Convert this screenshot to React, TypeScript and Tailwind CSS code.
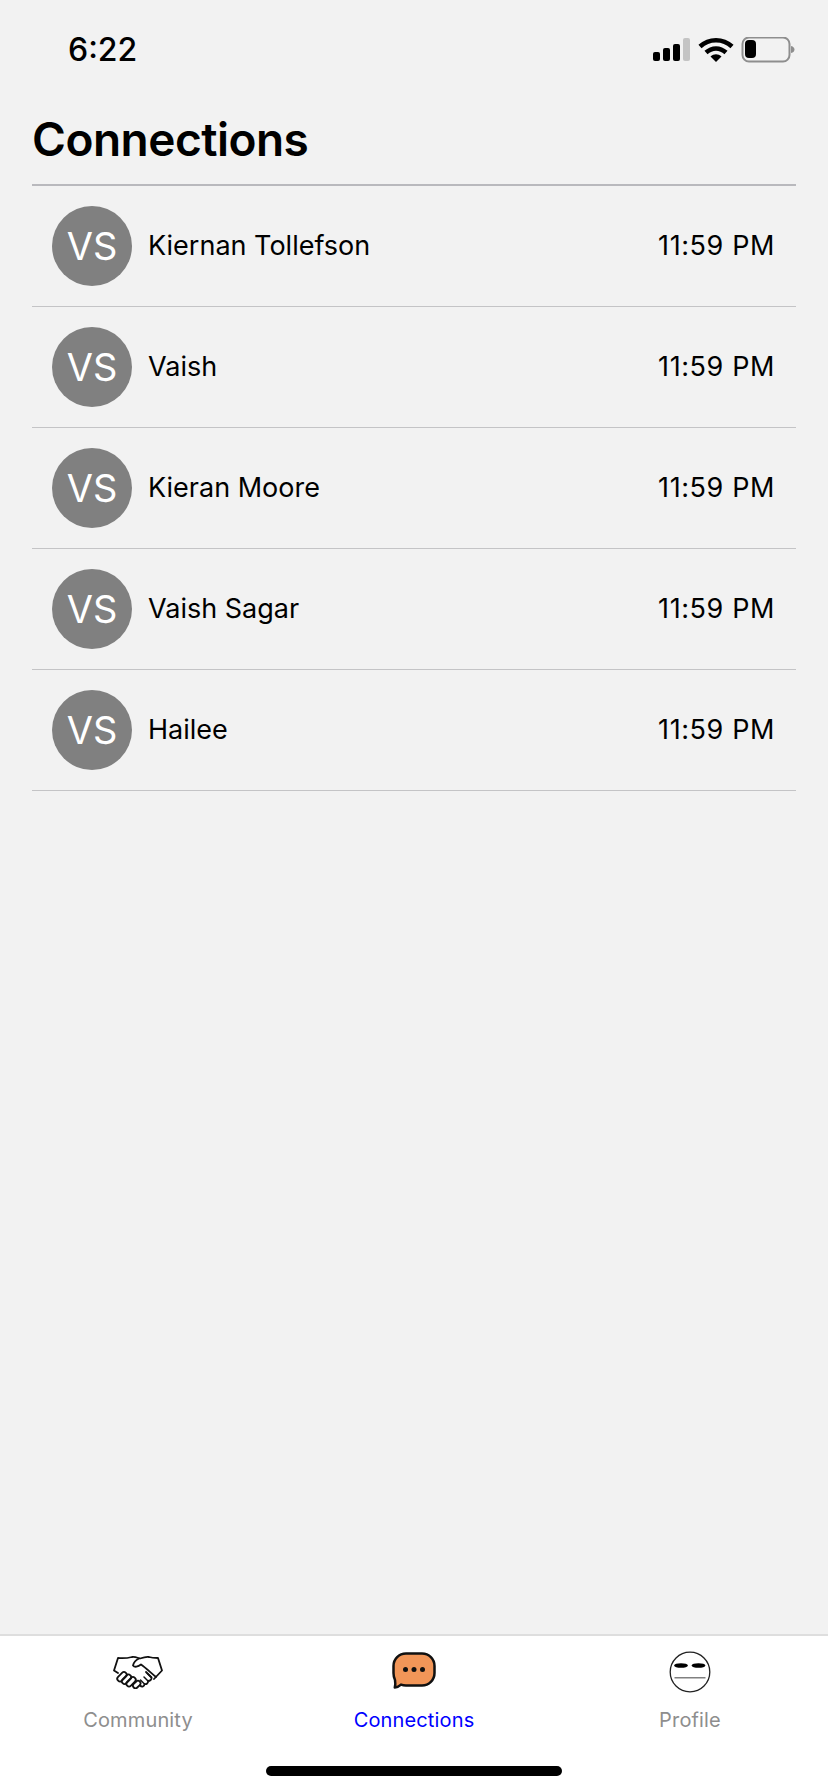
import React from 'react';

const connections = ['Kiernan Tollefson', 'Vaish', 'Kieran Moore', 'Vaish Sagar', 'Hailee'];

const StatusIcons = () => (
  <svg width="144" height="28" viewBox="0 0 144 28" className="block">
    <rect x="1" y="15" width="7" height="9" rx="2" fill="#000" />
    <rect x="11" y="11" width="7" height="13" rx="2" fill="#000" />
    <rect x="21" y="7" width="7" height="17" rx="2" fill="#000" />
    <rect x="31" y="1" width="7" height="23" rx="2" fill="#c4c4c4" />
    <path d="M48 9.5C57 1 71 1 80 9.5" fill="none" stroke="#000" strokeWidth="4.5" />
    <path d="M54 15.5C60 10 68 10 74 15.5" fill="none" stroke="#000" strokeWidth="4.5" />
    <path d="M58.5 19.5C62 16.5 66 16.5 69.500 19.500L64 25Z" fill="#000" />
    <rect x="90.500" y="0.500" width="47" height="24" rx="6.500" fill="none" stroke="#8e8e8e" strokeWidth="2" />
    <rect x="93" y="3" width="11" height="18" rx="4" fill="#000" />
    <path d="M139 9C141.500 9.500 142.500 11 142.500 12.500C142.500 14 141.500 15.500 139 16Z" fill="#8e8e8e" />
  </svg>
);

const HandshakeIcon = () => (
  <svg width="50" height="34" viewBox="0 0 50 34" fill="none" stroke="#111" strokeWidth="1.800" strokeLinejoin="round" strokeLinecap="round" className="block">
    <path d="M5 18L1 15.500L5 3C10 3.500 15 3 19 2C22 1.500 25 3 27 3.500C30 2.500 33 1.500 36 2C39 3 42 3 45 3L49 15.500L41 24" />
    <path d="M26 3.500C23 5 20.500 8 20 10.500C21.500 12.500 25 12 28 9.500C33 13 38 18 43 22" />
    <rect x="3.500" y="19" width="11" height="5.500" rx="2.700" transform="rotate(40 9 21.750) rotate(-85 9 21.750)" />
    <rect x="8" y="21.500" width="11" height="5.500" rx="2.700" transform="rotate(-45 13.500 24.250)" />
    <rect x="12.500" y="24" width="11" height="5.500" rx="2.700" transform="rotate(-45 18 26.750)" />
    <rect x="19.500" y="27" width="8.500" height="5" rx="2.500" transform="rotate(-45 23.750 29.500)" />
    <path d="M27 30.500C29 32.500 31.500 31.500 31.500 29C33.500 29.500 35.500 28 35 26C37 26 39 24.500 38.500 22.500L33 17" />
    <path d="M31.500 29L27.500 25M35 26L31 22M38.500 22.500L34.500 18.500" strokeWidth="1.500" />
  </svg>
);

const ChatIcon = () => (
  <svg width="44" height="37" viewBox="0 0 44 37" className="block">
    <path d="M14 1.500H30C37 1.500 42.500 7 42.500 14V21C42.500 28 37 33.500 30 33.500H14C12 33.500 10.500 33.200 9 32.600C7.500 34 5.500 35.200 2.800 35.500C3.500 33.500 3.500 31 3 28C2 26 1.500 23.500 1.500 21V14C1.500 7 7 1.500 14 1.500Z" fill="#f29658" stroke="#111" strokeWidth="2.500" strokeLinejoin="round" />
    <circle cx="13.500" cy="17.500" r="2.500" fill="#111" />
    <circle cx="22" cy="17.500" r="2.500" fill="#111" />
    <circle cx="30.500" cy="17.500" r="2.500" fill="#111" />
  </svg>
);

const ProfileIcon = () => (
  <svg width="42" height="42" viewBox="0 0 42 42" className="block">
    <circle cx="21" cy="21" r="19.800" fill="#fff" stroke="#222" strokeWidth="1.300" />
    <ellipse cx="12" cy="14.500" rx="6.800" ry="2.300" fill="#000" />
    <ellipse cx="29.500" cy="14.500" rx="6.800" ry="2.300" fill="#000" />
    <rect x="5.500" y="26" width="31" height="1.500" fill="#808080" />
  </svg>
);

const App: React.FC = () => {
  return (
    <div className="w-[828px] h-[1792px] bg-[#f2f2f2] flex flex-col font-['Inter',sans-serif] text-black overflow-hidden">
      <div className="h-[76px] shrink-0 flex items-end justify-between pl-[68px] pr-[32px] pb-[11px]">
        <span className="text-[32px] leading-[40px] font-medium relative top-[5px]">6:22</span>
        <StatusIcons />
      </div>

      <div className="px-[32px]">
        <h1 className="h-[110px] pt-[35px] text-[46px] leading-[56px] font-semibold tracking-[-0.5px] border-b-2 border-[#b9b9bd]">
          Connections
        </h1>
        {connections.map((name) => (
          <div key={name} className="h-[121px] flex items-center pl-[20px] pr-[21px] border-b border-[#c4c4c6]">
            <div className="w-[80px] h-[80px] rounded-full bg-[#808080] flex items-center justify-center text-white text-[38px] font-normal shrink-0">
              VS
            </div>
            <span className="ml-[16px] text-[27px]">{name}</span>
            <span className="ml-auto text-[27px] tracking-[0.6px]">11:59 PM</span>
          </div>
        ))}
      </div>

      <div className="mt-auto h-[158px] shrink-0 bg-white border-t-2 border-[#dedede] relative">
        <div className="grid grid-cols-3">
          <div className="flex flex-col items-center">
            <div className="h-[58px] flex items-end pb-[5px]"><HandshakeIcon /></div>
            <span className="mt-[14px] text-[20px] leading-[24px] tracking-[0.15px] text-[#8e8e8e]">Community</span>
          </div>
          <div className="flex flex-col items-center">
            <div className="h-[58px] flex items-end pb-[5px]"><ChatIcon /></div>
            <span className="mt-[14px] text-[20px] leading-[24px] tracking-[0.15px] text-[#0000ff]">Connections</span>
          </div>
          <div className="flex flex-col items-center">
            <div className="h-[58px] flex items-end pb-[1px]"><ProfileIcon /></div>
            <span className="mt-[14px] text-[20px] leading-[24px] tracking-[0.15px] text-[#8e8e8e]">Profile</span>
          </div>
        </div>
        <div className="absolute left-[266px] bottom-[16px] w-[296px] h-[10px] rounded-full bg-black" />
      </div>
    </div>
  );
};

export default App;
